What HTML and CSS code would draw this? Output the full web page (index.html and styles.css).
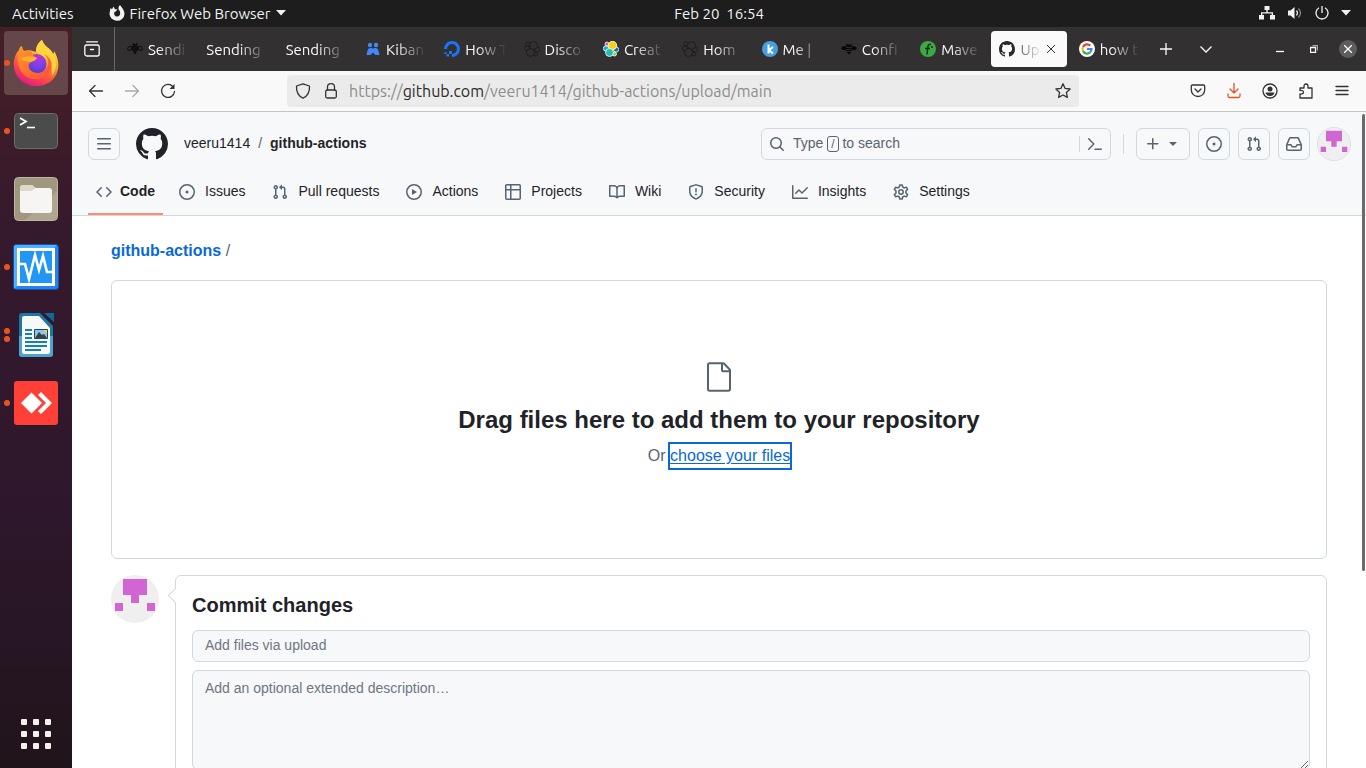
FILE: index.html
```html
<!DOCTYPE html>
<html lang="en">
<head>
<meta charset="utf-8">
<title>Upload files · veeru1414/github-actions</title>
<link rel="stylesheet" href="styles.css">
</head>
<body>
<svg class="defs" aria-hidden="true">
  <symbol id="i-mark" viewBox="0 0 16 16"><path d="M8 0c4.42 0 8 3.58 8 8a8.013 8.013 0 0 1-5.45 7.59c-.4.08-.55-.17-.55-.38 0-.27.01-1.13.01-2.2 0-.75-.25-1.23-.54-1.48 1.78-.2 3.65-.88 3.65-3.95 0-.88-.31-1.59-.82-2.15.08-.2.36-1.02-.08-2.12 0 0-.67-.22-2.2.82-.64-.18-1.32-.27-2-.27-.68 0-1.36.09-2 .27-1.53-1.03-2.2-.82-2.2-.82-.44 1.1-.16 1.92-.08 2.12-.51.56-.82 1.28-.82 2.15 0 3.06 1.86 3.75 3.64 3.95-.23.2-.44.55-.51 1.07-.46.21-1.61.55-2.33-.66-.15-.24-.6-.83-1.23-.82-.67.01-.27.38.01.53.34.19.73.9.82 1.13.16.45.68 1.31 2.69.94 0 .67.01 1.3.01 1.49 0 .21-.15.45-.55.38A7.995 7.995 0 0 1 0 8c0-4.42 3.58-8 8-8Z"/></symbol>
  <symbol id="i-issue" viewBox="0 0 16 16"><path d="M8 9.5a1.5 1.5 0 1 0 0-3 1.5 1.5 0 0 0 0 3Z"/><path d="M8 0a8 8 0 1 1 0 16A8 8 0 0 1 8 0ZM1.5 8a6.5 6.5 0 1 0 13 0 6.5 6.5 0 0 0-13 0Z"/></symbol>
  <symbol id="i-pull" viewBox="0 0 16 16"><path d="M1.5 3.25a2.25 2.25 0 1 1 3 2.122v5.256a2.251 2.251 0 1 1-1.5 0V5.372A2.25 2.25 0 0 1 1.5 3.25Zm5.677-.177L9.573.677A.25.25 0 0 1 10 .854V2.5h1A2.5 2.5 0 0 1 13.5 5v5.628a2.251 2.251 0 1 1-1.5 0V5a1 1 0 0 0-1-1h-1v1.646a.25.25 0 0 1-.427.177L7.177 3.427a.25.25 0 0 1 0-.354ZM3.75 2.5a.75.75 0 1 0 0 1.5.75.75 0 0 0 0-1.5Zm0 9.5a.75.75 0 1 0 0 1.5.75.75 0 0 0 0-1.5Zm8.25.75a.75.75 0 1 0 1.5 0 .75.75 0 0 0-1.5 0Z"/></symbol>
  <symbol id="i-identicon" viewBox="0 0 48 48"><circle cx="24" cy="24" r="24" fill="#efefef"/><path fill="#d165d4" d="M12 4h24v16h-8v8h-8v-8h-8ZM4 28h8v8H4ZM36 28h8v8h-8Z"/></symbol>
  <symbol id="i-bee" viewBox="0 0 16 16"><path d="M5.500 4h5M5 6h6M4.500 8h7M5.500 10h5M7 12h2" fill="none" stroke="#080808" stroke-width="1.300"/><path d="m6 2 1.500 2M10 2 8.500 4" stroke="#080808"/><path d="M5 6C2 4.500.5 6.500.5 8S3 10 5 8.200ZM11 6c3-1.500 4.500.5 4.500 2S13 10 11 8.200Z" fill="none" stroke="#080808"/></symbol>
  <symbol id="i-cluster" viewBox="0 0 16 16"><g fill="#323031" stroke="#1b1b1b" stroke-width=".8"><circle cx="4" cy="3" r="2"/><circle cx="3" cy="7.500" r="2.600"/><circle cx="13" cy="8.500" r="2.600"/><circle cx="11.500" cy="13" r="2"/><circle cx="9.500" cy="4.500" r="4"/><circle cx="6.500" cy="11.500" r="4"/></g></symbol>
</svg>

<header class="topbar">
  <span>Activities</span>
  <span class="topbar-app">
    <svg width="16" height="16" viewBox="0 0 16 16"><path fill="#f2f2f2" d="M1.500 3 3 4.200 4.500 1.500 6 4.200 8.500 4.500 7 6.200 5.600 7A3 3 0 1 0 11 7.500C11.300 6 10 5.500 9.500 4 9.300 2.300 10 1 11 0 12 2 15.500 4.500 15.500 9A7.500 7 0 1 1 .5 8.500Z"/></svg>
    <span>Firefox Web Browser</span>
    <svg width="10" height="6" viewBox="0 0 10 6"><path fill="#f2f2f2" d="M0 0h10L5 5.500Z"/></svg>
  </span>
  <time class="topbar-clock">Feb 20 &nbsp;16:54</time>
  <span class="topbar-status">
    <svg width="16" height="14" viewBox="0 0 16 14" fill="#f2f2f2"><path d="M5.500 0h5v4H8.700v2.300H14V9h2v4.500h-5V9h1.700V7.500H3.300V9H5v4.500H0V9h2V6.300h5.300V4H5.500Z"/></svg>
    <svg width="16" height="14" viewBox="0 0 16 14"><path fill="#f2f2f2" d="M1 4.500h2.500L7.500 1v12L3.500 9.500H1Z"/><path d="M9.500 4.500q2 2.500 0 5" fill="none" stroke="#ddd" stroke-width="1.300"/><path d="M11.500 2.500q4 4.500 0 9" fill="none" stroke="#888" stroke-width="1.300"/></svg>
    <svg width="14" height="14" viewBox="0 0 14 14" fill="none" stroke="#f2f2f2" stroke-width="1.300"><path d="M7 0v7M4 1.800a6 6 0 1 0 6 0"/></svg>
    <svg width="10" height="6" viewBox="0 0 10 6"><path fill="#f2f2f2" d="M0 0h10L5 5.500Z"/></svg>
  </span>
</header>

<div class="desktop">
  <nav class="dock" aria-label="Applications">
    <button class="dock-item active" aria-label="Firefox"><span class="dots"><i></i></span>
      <svg width="46" height="48" viewBox="0 0 46 48">
        <defs>
          <linearGradient id="fx-a" x1=".8" y1="0" x2=".3" y2="1"><stop offset="0" stop-color="#fff44f"/><stop offset=".35" stop-color="#ffb52e"/><stop offset=".65" stop-color="#ff5a35"/><stop offset="1" stop-color="#e31587"/></linearGradient>
          <radialGradient id="fx-b" cx=".6" cy=".2" r=".9"><stop offset="0" stop-color="#b833e1"/><stop offset=".5" stop-color="#7542e5"/><stop offset="1" stop-color="#4b3bb5"/></radialGradient>
          <linearGradient id="fx-c" x1="0" y1="0" x2="1" y2="1"><stop offset="0" stop-color="#ff9a25"/><stop offset="1" stop-color="#ff4b3f"/></linearGradient>
        </defs>
        <path fill="url(#fx-a)" d="M29 1c2 7 9 8 11 14 1-1 1-2 1-3 4 6 5 13 4 18C43 41 34 47 23 47S2 39 1 28C0 20 3 14 6 11c0-2 1-3 3-4 0 2 1 4 2 5 3-1 7-1 12 1 0-6 3-10 6-12Z"/>
        <path fill="#ffd53b" d="M29 1c2 7 9 8 11 14 4 7 4 15-1 22 1-10-3-16-8-20-4-1-7-3-8-5 0-5 3-9 6-11Z"/>
        <circle cx="23.500" cy="25" r="10" fill="url(#fx-b)"/>
        <path fill="url(#fx-c)" d="M6 12c1-3 2-5 3-5 0 3 1 5 3 6 4-2 7-1 8 3 2 2 3 3 4 3-1 2-3 3-6 4-2 1-3 3-2 6 2 5 11 7 16 2 5-5 4-12-1-16 9 4 10 15 3 21-8 7-21 5-26-4-4-7-4-14-2-20Z"/>
        <path fill="#ffb02e" d="M8 20c4-4 12-3 16-1-1 2-4 3-6 4-4-1-7 0-10-3Z"/>
      </svg></button>
    <button class="dock-item" aria-label="Terminal"><span class="dots"><i></i></span>
      <svg width="46" height="38" viewBox="0 0 46 38"><rect x="1.500" y="1.500" width="43" height="35" rx="4" fill="#4b4b4b" stroke="#6e6e6e"/><path d="m7 6 6 3.500L7 13" fill="none" stroke="#fff" stroke-width="1.800"/><path d="M14 15.500h8" stroke="#fff" stroke-width="1.600"/></svg></button>
    <button class="dock-item" aria-label="Files"><span class="dots"></span>
      <svg width="46" height="46" viewBox="0 0 46 46"><rect x="1.500" y="1.500" width="43" height="43" rx="4" fill="#a0977f" stroke="#bdb6a2"/><path fill="#aea68f" d="M44 15v25a4 4 0 0 1-4 4H12Z"/><path fill="#ddd8c8" d="M7 12q0-3 3-3h9l4 4v5H7Z"/><rect x="7" y="12" width="32" height="25" rx="3" fill="#f6f5f4"/><path fill="#ddd8c8" d="M7 12q0-3 3-3h9l4 3-5 3H7Z"/></svg></button>
    <button class="dock-item" aria-label="System Monitor"><span class="dots"><i></i></span>
      <svg width="46" height="46" viewBox="0 0 46 46"><rect x=".5" y=".5" width="45" height="45" rx="3" fill="#2384ef" stroke="#1252b5"/><path fill="#4eb2ff" d="M2 1h42l-3 3H5v37l-4 4V3Z"/><rect x="5.500" y="5.500" width="35" height="35" fill="#2196f5" stroke="#fff" stroke-width="3"/><path d="M6 20h6l4 15 6-24 4 15 4-14 4 16h6" fill="none" stroke="#fff" stroke-width="2.600"/></svg></button>
    <button class="dock-item" aria-label="LibreOffice Writer"><span class="dots"><i></i><i></i></span>
      <svg width="38" height="46" viewBox="0 0 38 46"><path fill="#1879a8" d="M5 1h18l13 13v28q0 3-3 3H5q-3 0-3-3V4q0-3 3-3Z"/><path fill="#4da3ce" d="M2 24h34v18q0 3-3 3H5q-3 0-3-3Z"/><path fill="#0f6a99" d="M27 1h10v9Z"/><path fill="#f8f8f8" d="M7 4h15l11 12v24q0 2-2 2H7q-2 0-2-2V6q0-2 2-2Z"/><path stroke="#1681b6" stroke-width="2" d="M8 18h7M8 22h7M8 26h7M8 30h22M8 34h22M8 38h16"/><path fill="#81c7ef" stroke="#174c66" d="M17.500 17.500h13v9h-13Z"/><path fill="#fc3" d="M26 18h4v4Z"/><path fill="#3d4040" d="m18 26 4-6 3 3 2-1 3 4Z"/></svg></button>
    <button class="dock-item" aria-label="AnyDesk"><span class="dots"><i></i></span>
      <svg width="44" height="44" viewBox="0 0 44 44"><rect width="44" height="44" rx="3" fill="#ff4037"/><path fill="#fff" d="M17.500 11.500 28 22 17.500 32.500 7 22ZM24 14l3-3 11 11-11 11-3-3 8-8Z"/></svg></button>
    <button class="dock-item apps" aria-label="Show Applications"><span class="dots"></span>
      <svg width="30" height="30" viewBox="0 0 30 30" fill="#f4f1ed"><rect width="6" height="6" rx="1"/><rect x="12" width="6" height="6" rx="1"/><rect x="24" width="6" height="6" rx="1"/><rect y="12" width="6" height="6" rx="1"/><rect x="12" y="12" width="6" height="6" rx="1"/><rect x="24" y="12" width="6" height="6" rx="1"/><rect y="24" width="6" height="6" rx="1"/><rect x="12" y="24" width="6" height="6" rx="1"/><rect x="24" y="24" width="6" height="6" rx="1"/></svg></button>
  </nav>

  <div class="browser">
    <div class="tabbar">
      <button class="tabs-view" aria-label="View tabs"><svg width="16" height="16" viewBox="0 0 16 16" fill="none" stroke="#fbfbfe" stroke-width="1.300" stroke-linecap="round"><rect x=".8" y="4" width="14.400" height="11" rx="2"/><path d="M2.500.8h11M6.500 8.500h3"/></svg></button>
      <div class="tabs">
        <button class="tab"><svg><use href="#i-bee"/></svg><span>Sendi</span></button>
        <button class="tab"><span>Sending</span></button>
        <button class="tab"><span>Sending</span></button>
        <button class="tab"><svg viewBox="0 0 16 16" fill="#4386f5"><circle cx="5" cy="4" r="2.200"/><circle cx="11" cy="4" r="2.200"/><path d="M1.500 14 2.500 9.500q.5-2.500 2.800-2.500H7l1 1 1-1h1.700q2.300 0 2.800 2.500l1 4.500h-4L8 11.500 5.500 14Z"/></svg><span>Kiban</span></button>
        <button class="tab"><svg viewBox="0 0 16 16" fill="#1b73f8"><path d="M8 16v-3.100a4.900 4.900 0 1 0-4.900-4.900H0a8 8 0 1 1 8 8ZM5 10h3v3H5ZM2.500 13H5v2.500H2.500ZM.5 11h2v2h-2Z"/></svg><span>How T</span></button>
        <button class="tab"><svg><use href="#i-cluster"/></svg><span>Disco</span></button>
        <button class="tab"><svg viewBox="0 0 16 16" stroke="#fff" stroke-width=".8"><circle cx="4" cy="3" r="2" fill="#ee5097"/><circle cx="3" cy="7.500" r="2.700" fill="#17a8e0"/><circle cx="13" cy="8.500" r="2.700" fill="#0779a1"/><circle cx="11.500" cy="13" r="2" fill="#93c83e"/><circle cx="9.500" cy="4.500" r="4.200" fill="#fed10a"/><circle cx="6.500" cy="11.500" r="4" fill="#24bbb1"/></svg><span>Creat</span></button>
        <button class="tab"><svg><use href="#i-cluster"/></svg><span>Hom</span></button>
        <button class="tab"><svg viewBox="0 0 16 16"><circle cx="8" cy="8" r="8" fill="#459fdf"/><path d="M6.500 3.500v9M11 6l-4 3 4 3.500" fill="none" stroke="#fff" stroke-width="2"/></svg><span>Me |</span></button>
        <button class="tab"><svg fill="#080808" viewBox="0 0 16 16"><path d="M0 7q3-3 5.500-1.500V4L4.500 2.500l2.500 1h2l2.500-1-1 1.500v1.500Q13 4 16 7q-1 3-5 2v1.500L8 13.500 5 10.500V9Q1 10 0 7Z"/><path stroke="#323031" stroke-width=".8" d="M5 6.500h6M5 8.500h6M5 10.500h6"/></svg><span>Confi</span></button>
        <button class="tab"><svg viewBox="0 0 16 16"><circle cx="8" cy="8" r="8" fill="#3ea843"/><path d="M7 13.500 8 5q.5-2 3-1.500M5 7.500h5" fill="none" stroke="#14351a" stroke-width="1.600"/><circle cx="12" cy="6" r="1" fill="#14351a"/></svg><span>Mave</span></button>
        <button class="tab current"><svg fill="#24292f"><use href="#i-mark"/></svg><span>Upl</span><svg class="tab-close" viewBox="0 0 8 8" fill="none" stroke="#333"><path d="m0 0 8 8M8 0 0 8"/></svg></button>
        <button class="tab"><svg viewBox="0 0 16 16" fill="none" stroke-width="2.200"><circle cx="8" cy="8" r="8" fill="#fff"/><path stroke="#ea4335" d="M4 6a4.500 4.500 0 0 1 7.300-1.400"/><path stroke="#fbbc05" d="M4 10a4.500 4.500 0 0 1 0-4"/><path stroke="#34a853" d="M11 11.500A4.500 4.500 0 0 1 4 10"/><path stroke="#4285f4" d="M8 8h4.500q0 2.200-1.500 3.500"/></svg><span>how t</span></button>
      </div>
      <button class="tab-tool" aria-label="New tab"><svg width="12" height="12" viewBox="0 0 12 12"><path d="M6 0v12M0 6h12"/></svg></button>
      <button class="tab-tool" aria-label="List all tabs"><svg width="12" height="7" viewBox="0 0 12 7"><path d="m.5.5 5.500 5.500L11.500.5"/></svg></button>
      <div class="window-tools">
        <button aria-label="Minimize"><svg width="8" height="8" viewBox="0 0 8 8"><path d="M0 6.500h8"/></svg></button>
        <button aria-label="Restore"><svg width="8" height="8" viewBox="0 0 8 8"><path d="M.5 2.500h5v5h-5Z"/><path stroke-opacity=".6" d="M2.500.5h5v5"/></svg></button>
        <button class="window-close" aria-label="Close"><svg width="8" height="8" viewBox="0 0 8 8"><path d="m0 0 8 8M8 0 0 8"/></svg></button>
      </div>
    </div>

    <div class="toolbar">
      <button aria-label="Back"><svg width="16" height="16" viewBox="0 0 16 16"><path d="M14.500 8h-13M7 2.500 1.500 8 7 13.500"/></svg></button>
      <button class="faded" aria-label="Forward"><svg width="16" height="16" viewBox="0 0 16 16"><path d="M1.500 8h13M9 2.500 14.500 8 9 13.500"/></svg></button>
      <button aria-label="Reload"><svg width="16" height="16" viewBox="0 0 16 16"><path d="M14.500 8.500a6.500 6.500 0 1 1-1.700-5"/><path d="M14.500 1v5h-5Z" fill="#333" stroke="none"/></svg></button>
      <div class="urlbar">
        <svg width="16" height="16" viewBox="0 0 16 16"><path d="M8 .8 14.500 3q.5 9-6.500 12.200Q1 12 1.500 3Z"/></svg>
        <svg width="16" height="16" viewBox="0 0 16 16"><rect x="2.700" y="7" width="10.600" height="8" rx="1.500"/><path d="M4.500 7V4a3.500 3.300 0 0 1 7 0v3"/></svg>
        <a class="url" href="#">https://<b>github.com</b>/veeru1414/github-actions/upload/main</a>
        <svg width="16" height="16" viewBox="0 0 16 16"><path d="m8 .8 2.100 4.600 5 .6-3.700 3.400 1 5L8 12l-4.400 2.400 1-5L.9 6l5-.6Z"/></svg>
      </div>
      <button aria-label="Pocket"><svg width="16" height="16" viewBox="0 0 16 16"><path d="M2.500 2h11q1.200 0 1.200 1.200V7a6.700 6.500 0 0 1-13.400 0V3.200Q1.300 2 2.500 2ZM5 6l3 3 3-3"/></svg></button>
      <button class="download" aria-label="Downloads"><svg width="16" height="16" viewBox="0 0 16 16"><path d="M8 0v10M4 6l4 4 4-4M2 11v2q0 1.500 1.500 1.500h9q1.500 0 1.500-1.500v-2"/></svg></button>
      <button aria-label="Account"><svg width="16" height="16" viewBox="0 0 16 16"><circle cx="8" cy="8" r="7"/><g fill="#333" stroke="none"><circle cx="8" cy="6" r="2.500"/><path d="M3.500 9.500h9Q11.500 13 8 13T3.500 9.500Z"/></g></svg></button>
      <button aria-label="Extensions"><svg width="16" height="16" viewBox="0 0 16 16"><path d="M2 15v-4q3.500.3 3.500-1.800T2 7.500V5h4V3.500q0-2.500 2-2.500t2 2.500V5h4v10Z"/></svg></button>
      <button aria-label="Menu"><svg width="16" height="16" viewBox="0 0 16 16"><path d="M2 3.500h12M2 7.500h12M2 11.500h12"/></svg></button>
    </div>

    <div class="page">
      <div class="scroll-thumb"></div>
      <header class="gh-header">
        <div class="gh-bar">
          <button class="gh-btn" aria-label="Open menu"><svg width="16" height="16" viewBox="0 0 16 16"><path d="M1 2.750A.75.75 0 0 1 1.750 2h12.500a.75.75 0 0 1 0 1.500H1.750A.75.75 0 0 1 1 2.750Zm0 5A.75.75 0 0 1 1.750 7h12.500a.75.75 0 0 1 0 1.500H1.750A.75.75 0 0 1 1 7.750ZM1.750 12h12.500a.75.75 0 0 1 0 1.500H1.750a.75.75 0 0 1 0-1.500Z"/></svg></button>
          <a class="gh-logo" href="#" aria-label="Homepage"><svg width="32" height="32"><use href="#i-mark"/></svg></a>
          <div class="gh-context"><a href="#">veeru1414</a><span>/</span><a class="strong" href="#">github-actions</a></div>
          <div class="gh-search">
            <button class="gh-search-main"><svg width="16" height="16" viewBox="0 0 16 16"><path d="M10.680 11.740a6 6 0 0 1-7.922-8.982 6 6 0 0 1 8.982 7.922l3.040 3.040a.749.749 0 0 1-.326 1.275.749.749 0 0 1-.734-.215ZM11.500 7a4.499 4.499 0 1 0-8.997 0A4.499 4.499 0 0 0 11.500 7Z"/></svg><span>Type <kbd>/</kbd> to search</span></button>
            <button class="gh-palette" aria-label="Command palette"><svg class="line" width="16" height="16" viewBox="0 0 16 16"><path d="m1.750 2.750 5 5.250-5 5.250M8 13.250h6.250"/></svg></button>
          </div>
          <div class="gh-actions">
            <button class="gh-btn wide" aria-label="Create new"><svg width="16" height="16" viewBox="0 0 16 16"><path d="M7.750 2a.75.75 0 0 1 .75.75V7h4.250a.75.75 0 0 1 0 1.500H8.500v4.250a.75.75 0 0 1-1.500 0V8.500H2.750a.75.75 0 0 1 0-1.500H7V2.750A.75.75 0 0 1 7.750 2Z"/></svg><svg width="16" height="16" viewBox="0 0 16 16"><path d="m4.427 6.427 3.396 3.396a.25.25 0 0 0 .354 0l3.396-3.396A.25.25 0 0 0 11.396 6H4.604a.25.25 0 0 0-.177.427Z"/></svg></button>
            <button class="gh-btn" aria-label="Issues"><svg width="16" height="16"><use href="#i-issue"/></svg></button>
            <button class="gh-btn" aria-label="Pull requests"><svg width="16" height="16"><use href="#i-pull"/></svg></button>
            <button class="gh-btn" aria-label="Notifications"><svg width="16" height="16" viewBox="0 0 16 16"><path d="M2.800 2.060A1.750 1.750 0 0 1 4.410 1h7.180c.7 0 1.333.417 1.610 1.060l2.740 6.395c.04.093.06.194.06.295v4.500A1.750 1.750 0 0 1 14.250 15H1.750A1.750 1.750 0 0 1 0 13.250v-4.500c0-.101.020-.202.060-.295Zm1.610.44a.25.25 0 0 0-.23.152L1.887 8H4.750a.75.75 0 0 1 .6.300L6.625 10h2.750l1.275-1.700a.75.75 0 0 1 .6-.3h2.863L11.820 2.652a.25.25 0 0 0-.23-.152Zm10.090 7h-2.875l-1.275 1.700a.75.75 0 0 1-.6.300h-3.500a.75.75 0 0 1-.6-.3L4.375 9.500H1.500v3.750c0 .138.112.25.250.25h12.500a.25.25 0 0 0 .25-.25Z"/></svg></button>
          </div>
          <a class="gh-avatar" href="#" aria-label="Profile"><svg width="32" height="32"><use href="#i-identicon"/></svg></a>
        </div>
        <nav class="gh-nav" aria-label="Repository">
          <a class="selected" href="#"><svg viewBox="0 0 16 16"><path d="m11.280 3.220 4.250 4.250a.75.75 0 0 1 0 1.060l-4.250 4.250a.749.749 0 0 1-1.275-.326.749.749 0 0 1 .215-.734L13.940 8l-3.720-3.720a.749.749 0 0 1 .326-1.275.749.749 0 0 1 .734.215Zm-6.560 0a.751.751 0 0 1 1.042.018.751.751 0 0 1 .018 1.042L2.060 8l3.720 3.720a.749.749 0 0 1-.326 1.275.749.749 0 0 1-.734-.215L.47 8.530a.75.75 0 0 1 0-1.060Z"/></svg><span>Code</span></a>
          <a href="#"><svg><use href="#i-issue"/></svg><span>Issues</span></a>
          <a href="#"><svg><use href="#i-pull"/></svg><span>Pull requests</span></a>
          <a href="#"><svg viewBox="0 0 16 16"><path d="M8 0a8 8 0 1 1 0 16A8 8 0 0 1 8 0ZM1.500 8a6.500 6.500 0 1 0 13 0 6.500 6.500 0 0 0-13 0Zm4.879-2.773 4.264 2.559a.25.25 0 0 1 0 .428l-4.264 2.559A.25.25 0 0 1 6 10.559V5.442a.25.25 0 0 1 .379-.215Z"/></svg><span>Actions</span></a>
          <a href="#"><svg viewBox="0 0 16 16"><path d="M0 1.750C0 .784.784 0 1.750 0h12.500C15.216 0 16 .784 16 1.750v12.500A1.750 1.750 0 0 1 14.250 16H1.750A1.750 1.750 0 0 1 0 14.250ZM6.500 6.500v8h7.750a.25.25 0 0 0 .25-.25V6.500Zm8-1.500V1.750a.25.25 0 0 0-.25-.25H6.500V5Zm-13 1.500v7.750c0 .138.112.25.250.25H5v-8ZM5 5V1.500H1.750a.25.25 0 0 0-.25.25V5Z"/></svg><span>Projects</span></a>
          <a href="#"><svg viewBox="0 0 16 16"><path d="M0 1.750A.75.75 0 0 1 .75 1h4.253c1.227 0 2.317.59 3 1.501A3.743 3.743 0 0 1 11.006 1h4.245a.75.75 0 0 1 .75.75v10.500a.75.75 0 0 1-.75.75h-4.507a2.250 2.250 0 0 0-1.591.659l-.622.621a.75.75 0 0 1-1.060 0l-.622-.621A2.250 2.250 0 0 0 5.258 13H.75a.75.75 0 0 1-.75-.75Zm7.251 10.324.004-5.073-.002-2.253A2.250 2.250 0 0 0 5.003 2.500H1.500v9h3.757a3.750 3.750 0 0 1 1.994.574ZM8.755 4.750l-.004 7.322a3.752 3.752 0 0 1 1.992-.572H14.500v-9h-3.495a2.250 2.250 0 0 0-2.250 2.250Z"/></svg><span>Wiki</span></a>
          <a href="#"><svg viewBox="0 0 16 16"><path d="M7.467.133a1.748 1.748 0 0 1 1.066 0l5.250 1.680A1.750 1.750 0 0 1 15 3.480V7c0 1.566-.32 3.182-1.303 4.682-.983 1.498-2.585 2.813-5.032 3.855a1.697 1.697 0 0 1-1.330 0c-2.447-1.042-4.049-2.357-5.032-3.855C1.320 10.182 1 8.566 1 7V3.480a1.750 1.750 0 0 1 1.217-1.667Zm.61 1.429a.25.25 0 0 0-.153 0l-5.250 1.680a.25.25 0 0 0-.174.238V7c0 1.358.275 2.666 1.057 3.860.784 1.194 2.121 2.340 4.366 3.297a.196.196 0 0 0 .154 0c2.245-.956 3.582-2.104 4.366-3.298C13.225 9.666 13.500 8.360 13.500 7V3.480a.251.251 0 0 0-.174-.237ZM8.750 4.750v3a.75.75 0 0 1-1.500 0v-3a.75.75 0 0 1 1.500 0ZM9 10.500a1 1 0 1 1-2 0 1 1 0 0 1 2 0Z"/></svg><span>Security</span></a>
          <a href="#"><svg viewBox="0 0 16 16"><path d="M1.500 1.750V13.500h13.750a.75.75 0 0 1 0 1.500H.75a.75.75 0 0 1-.75-.75V1.750a.75.75 0 0 1 1.500 0Zm14.280 2.530-5.250 5.250a.75.75 0 0 1-1.060 0L7 7.060 4.280 9.780a.751.751 0 0 1-1.060-1.060l3.250-3.250a.75.75 0 0 1 1.060 0L10 7.940l4.720-4.720a.751.751 0 0 1 1.060 1.060Z"/></svg><span>Insights</span></a>
          <a href="#"><svg class="line" viewBox="0 0 16 16"><circle cx="8" cy="8" r="2.200"/><path d="M6.800.9h2.400l.5 2.100 1.500.9 2.100-.7 1.300 2.200L13 7v2l1.600 1.600-1.300 2.200-2.100-.7-1.500.9-.5 2.100H6.800L6.300 13l-1.500-.9-2.100.7-1.300-2.200L3 9V7L1.400 5.400l1.300-2.200 2.100.7L6.300 3Z"/></svg><span>Settings</span></a>
        </nav>
      </header>

      <main class="content">
        <div class="crumbs"><a href="#">github-actions</a> <span>/</span></div>
        <section class="dropzone">
          <svg width="32" height="32" viewBox="0 0 24 24"><path d="M3 3a2 2 0 0 1 2-2h9.982a2 2 0 0 1 1.414.586l4.018 4.018A2 2 0 0 1 21 7.018V21a2 2 0 0 1-2 2H5a2 2 0 0 1-2-2Zm2-.5a.5.5 0 0 0-.5.5v18a.5.5 0 0 0 .5.5h14a.5.5 0 0 0 .5-.5V8.500h-4a2 2 0 0 1-2-2v-4Zm10 0v4a.5.5 0 0 0 .5.500h4a.5.5 0 0 0-.146-.336l-4.018-4.018A.5.5 0 0 0 15 2.500Z"/></svg>
          <h1>Drag files here to add them to your repository</h1>
          <p>Or <a href="#">choose your files</a></p>
        </section>
        <section class="commit">
          <svg width="48" height="48"><use href="#i-identicon"/></svg>
          <form class="commit-box">
            <h2>Commit changes</h2>
            <input type="text" aria-label="Commit message" placeholder="Add files via upload">
            <textarea aria-label="Extended description" placeholder="Add an optional extended description…"></textarea>
          </form>
        </section>
      </main>
    </div>
  </div>
</div>
</body>
</html>
```
FILE: styles.css
```css
* { box-sizing: border-box; }

body {
  margin: 0;
  height: 100vh;
  display: flex;
  flex-direction: column;
  overflow: hidden;
  font-family: "Liberation Sans", Arial, sans-serif;
  font-size: 14px;
  color: #1f2328;
}

button {
  border: 0;
  padding: 0;
  background: none;
  color: inherit;
  font: inherit;
  display: flex;
  align-items: center;
  justify-content: center;
}

a { color: inherit; text-decoration: none; }
svg { flex: none; display: block; }
.defs { position: absolute; width: 0; height: 0; }

/* Desktop top bar */
.topbar {
  flex: none;
  height: 27px;
  padding: 0 15px 1px 12px;
  display: flex;
  align-items: center;
  background: #1d1d1d;
  color: #f2f2f2;
  font-family: Ubuntu, "Noto Sans", sans-serif;
  font-size: 15px;
  position: relative;
}
.topbar-app { display: flex; align-items: center; gap: 5px; margin-left: 35px; }
.topbar-clock { position: absolute; left: 72px; right: 0; margin: 0 auto; width: max-content; }
.topbar-status { margin-left: auto; display: flex; align-items: center; gap: 12px; }

.desktop { flex: 1; min-height: 0; display: flex; }

/* Dock */
.dock {
  flex: none;
  width: 72px;
  padding: 4px;
  display: flex;
  flex-direction: column;
  gap: 4px;
  background: linear-gradient(#461f25, #35192d 28%, #2e172c 65%, #20141b);
}
.dock-item { position: relative; height: 64px; border-radius: 4px; }
.dock-item.active { background: #654649; }
.dock-item.apps { margin-top: auto; margin-bottom: -2px; }
.dots { position: absolute; left: 0; display: flex; flex-direction: column; gap: 2px; }
.dots i { width: 6px; height: 6px; border-radius: 50%; background: #e95420; }

/* Browser window */
.browser { flex: 1; min-width: 0; display: flex; flex-direction: column; }

.tabbar {
  flex: none;
  height: 44px;
  display: flex;
  align-items: center;
  background: #323031;
  color: #fbfbfe;
  font-family: Ubuntu, "Noto Sans", sans-serif;
  font-size: 15px;
}
.tabs-view { width: 43px; height: 44px; padding-right: 2px; border-right: 1px solid #686667; margin-right: 4px; }
.tabs { flex: 1; min-width: 0; display: flex; gap: 4px; }
.tab {
  flex: 1 1 0;
  min-width: 0;
  height: 36px;
  padding: 0 0 0 8px;
  gap: 5px;
  justify-content: flex-start;
  border-radius: 4px;
}
.tab svg { width: 16px; height: 16px; }
.tab span {
  flex: 1;
  min-width: 0;
  overflow: hidden;
  white-space: nowrap;
  text-align: left;
  mask-image: linear-gradient(to left, transparent 6px, #000 36px);
}
.tab.current { background: #fafafa; color: #555; }
.tab.current span { mask-image: linear-gradient(to left, transparent, #000 24px); }
.tab .tab-close { width: 8px; height: 8px; margin-right: 12px; }
.tab-tool { width: 40px; height: 36px; }
.tab-tool + .tab-tool { margin-right: 45px; }
.tab-tool svg, .window-tools svg { fill: none; stroke: #fbfbfe; stroke-width: 1.3; }
.window-tools { display: flex; align-items: center; gap: 16px; padding-right: 9px; }
.window-tools button { width: 18px; height: 18px; border-radius: 50%; }
.window-tools .window-close { background: #5e5d5d; }

.toolbar {
  flex: none;
  height: 41px;
  padding: 0 6px;
  display: flex;
  align-items: center;
  background: #f9f9fa;
  border-bottom: 1px solid #c4c4c6;
}
.toolbar button { width: 36px; height: 32px; flex: none; }
.toolbar svg { fill: none; stroke: #333; stroke-width: 1.3; stroke-linejoin: round; stroke-linecap: round; }
.toolbar .faded svg { stroke: #aaa; }
.toolbar .download svg { stroke: #e95420; }
.urlbar {
  flex: 1;
  min-width: 0;
  height: 32px;
  margin: 0 101px;
  padding: 0 8px;
  display: flex;
  align-items: center;
  gap: 12px;
  background: #ebebeb;
  border-radius: 4px;
}
.url {
  flex: 1;
  min-width: 0;
  margin-left: -2px;
  overflow: hidden;
  white-space: nowrap;
  font-family: Ubuntu, "Noto Sans", sans-serif;
  font-size: 16px;
  color: #8e8e8e;
}
.url b { font-weight: 400; color: #2b2b2b; }

/* Page */
.page { flex: 1; min-height: 0; position: relative; overflow: hidden; background: #fff; }
.scroll-thumb { position: absolute; top: 2px; right: 1px; width: 3px; height: 457px; border-radius: 2px; background: #6b6b6b; }

.gh-header { background: #f6f8fa; border-bottom: 1px solid #d1d9e0; }
.gh-bar { display: flex; align-items: center; padding: 16px 16px 8px; height: 56px; }
.gh-bar svg, .gh-nav svg { fill: #59636e; }
.gh-header .line {
  fill: none;
  stroke: #59636e;
  stroke-width: 1.5;
  stroke-linecap: round;
  stroke-linejoin: round;
}
.gh-btn {
  width: 32px;
  height: 32px;
  border: 1px solid #d1d9e0;
  border-radius: 6px;
}
.gh-btn.wide { width: 54px; gap: 4px; }
.gh-bar .gh-logo { margin-left: 16px; }
.gh-bar .gh-logo svg { fill: #1f2328; }
.gh-context { display: flex; gap: 8px; margin-left: 16px; padding-bottom: 2px; line-height: 20px; }
.gh-context span { color: #59636e; }
.gh-context .strong { font-weight: 700; }
.gh-search {
  width: 350px;
  height: 32px;
  margin-left: auto;
  display: flex;
  align-items: center;
  border: 1px solid #d1d9e0;
  border-radius: 6px;
}
.gh-search-main { flex: 1; gap: 8px; padding-left: 7px; justify-content: flex-start; color: #59636e; }
.gh-search-main span { padding-bottom: 2px; }
.gh-search kbd { font: inherit; font-size: 12px; padding: 0 3px; border: 1px solid #59636e; border-radius: 3px; }
.gh-palette { width: 31px; height: 16px; border-left: 1px solid #d1d9e0; }
.gh-actions { display: flex; gap: 8px; align-items: center; margin-left: 12px; }
.gh-actions::before { content: ""; width: 1px; height: 20px; margin-right: 4px; background: #d1d9e0; }
.gh-avatar { margin-left: 7px; border: 1px solid #d9dde1; border-radius: 50%; margin-right: -1px; }

.gh-nav { display: flex; gap: 11px; padding: 0 16px; height: 47px; }
.gh-nav a { display: flex; align-items: center; gap: 10px; padding: 0 8px; white-space: nowrap; }
.gh-nav span { padding-bottom: 2px; }
.gh-nav svg { width: 16px; height: 16px; }
.gh-nav .selected { gap: 8px; font-weight: 700; margin-right: -3px; box-shadow: inset 0 -2px #fd8c73; }

.content { max-width: 1280px; margin: 0 auto; padding: 24px 32px; }
.crumbs { font-size: 16px; line-height: 22px; margin-bottom: 18px; color: #59636e; }
.crumbs a { color: #0969da; font-weight: 700; }
.dropzone {
  padding: 80px 16px;
  display: flex;
  flex-direction: column;
  align-items: center;
  border: 1px solid #d1d9e0;
  border-radius: 6px;
}
.dropzone svg { fill: #59636e; }
.dropzone h1 { margin: 9px 0 6px; font-size: 24px; line-height: 36px; }
.dropzone p { margin: 0 0 10px; font-size: 16px; line-height: 24px; color: #59636e; }
.dropzone p a { display: inline-block; color: #0969da; text-decoration: underline; text-underline-offset: 2px; outline: 2px solid #0969da; }

.commit { display: flex; gap: 16px; margin-top: 16px; align-items: flex-start; }
.commit-box {
  position: relative;
  flex: 1;
  min-width: 0;
  padding: 16px;
  border: 1px solid #d1d9e0;
  border-radius: 6px;
  background: #fff;
}
.commit-box::before {
  content: "";
  position: absolute;
  top: 14px;
  left: -6px;
  width: 10px;
  height: 10px;
  background: #fff;
  border: solid #d1d9e0;
  border-width: 0 0 1px 1px;
  transform: rotate(45deg);
}
.commit-box h2 { margin: 0 0 12px; font-size: 20px; line-height: 26px; }
.commit-box input, .commit-box textarea {
  display: block;
  width: 100%;
  padding: 0 12px;
  border: 1px solid #d1d9e0;
  border-radius: 6px;
  background: #f6f8fa;
  font: inherit;
  line-height: 20px;
}
.commit-box input { height: 32px; margin-bottom: 8px; padding-bottom: 2px; }
.commit-box textarea { height: 100px; padding-top: 7px; }
.commit-box ::placeholder { color: #6e7781; opacity: 1; }
```
